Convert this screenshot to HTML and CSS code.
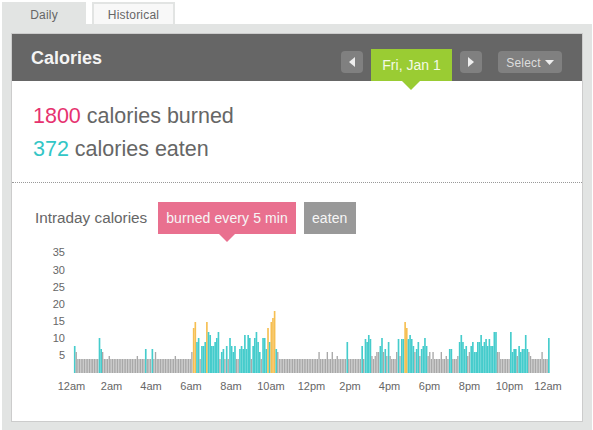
FILE: index.html
```html
<!DOCTYPE html>
<html>
<head>
  <title>Calories</title>
  <link rel="stylesheet" href="styles.css">
</head>
<body>
  <div class="tabs">
    <div class="tab active">Daily</div>
    <div class="tab">Historical</div>
  </div>
  <div class="frame">
    <div class="panel">
      <div class="header">
        <h1>Calories</h1>
        <div class="controls">
          <div class="btn arrow"><svg width="6" height="10" viewBox="0 0 6 10"><polygon points="6,0 6,10 0,5" fill="#eee"/></svg></div>
          <div class="date">Fri, Jan 1</div>
          <div class="btn arrow"><svg width="6" height="10" viewBox="0 0 6 10"><polygon points="0,0 0,10 6,5" fill="#eee"/></svg></div>
          <div class="btn select"><span class="select-text">Select</span> <svg width="9" height="5" viewBox="0 0 9 5"><polygon points="0,0 9,0 4.5,5" fill="#eee"/></svg></div>
        </div>
      </div>

      <div class="stats">
        <p><span class="burned">1800</span> calories burned</p>
        <p><span class="eaten">372</span> calories eaten</p>
      </div>

      <div class="intraday">
        <span class="intraday-label">Intraday calories</span>
        <div class="pill pink">burned every 5 min</div>
        <div class="pill grey">eaten</div>
      </div>

      <!-- viewBox is in page pixels so the bar data below reads straight off the chart -->
      <svg id="chart" class="chart" width="570" height="161" viewBox="12 243 570 161"></svg>
    </div>
  </div>

  <script>
  const chart = document.getElementById('chart');
  const NS = 'http://www.w3.org/2000/svg';

  // [x, height] in px, everything else is the flat 14px grey bar
  const grey = [[76.5,21],[103,21],[110,17],[136.7,17],[154.7,21],[174.7,17],[191,21],[217.7,17],[277.3,21],
    [318.7,21],[326.7,21],[331.7,21],[336.7,17],[371.7,17],[375,17],[376.7,21],[378.3,21],[382.7,21],[386,17],
    [389.3,17],[396,21],[399.3,17],[414.7,21],[419.7,17],[428,17],[429.7,21],[433,21],[441,21],[446,17],
    [457.7,17],[467.3,17],[469,21],[497.3,21],[499,21],[516.7,17],[528.3,21],[530,17],[541.7,21]];
  const cyan = [[75,27],[100,35],[101.7,24],[146,24],[152.7,24],[196,31],[198,35],[201,27],[202.7,27],[204.3,31],
    [207.7,41],[209.3,38],[211,27],[212.7,27],[214.3,31],[216,35],[219,41],[222.3,21],[224,24],[225.7,21],
    [227.3,27],[229,35],[230.7,27],[232.3,21],[234,27],[239,24],[240.7,27],[242.3,24],[244,38],[245.7,24],
    [247.3,38],[249,35],[252.3,27],[254,35],[255.7,41],[257.3,31],[259,21],[262.3,35],[264,35],[265.7,24],
    [269,31],[275.3,24],[346.7,31],[362.7,27],[364.7,34],[366.3,31],[368.3,38],[370,34],[380,27],[381.3,35],
    [384.3,24],[387.7,31],[398,34],[401.3,34],[402.7,34],[408,34],[409.7,38],[411.3,34],[413,27],[416.3,24],
    [418,31],[421.3,24],[423,27],[424.3,35],[426.3,27],[449,24],[450.7,24],[459,31],[460.7,38],[462.3,31],
    [464,24],[465.7,27],[470.7,27],[472.3,31],[474,21],[475.7,21],[477.3,31],[479,31],[480.7,38],[482.3,27],
    [484,31],[485.7,34],[487.3,27],[489,34],[490.7,27],[492.3,27],[494,41],[495.7,41],[510,41],[511.7,21],
    [513.3,24],[515,24],[518.3,27],[520,21],[521.7,24],[523.3,24],[525,38],[526.7,24],[548.3,35]];
  const orange = [[192.7,45],[194.5,51],[206,51],[267,45],[270.7,51],[272.3,55],[274,62],[404.7,51],[406.3,45]];

  const START = 74.5, STEP = 1.652, BASE = 373;
  const slots = new Array(288).fill(null).map(() => ({ h: 14, cls: 'bar-grey', w: 1.35 }));

  function mark(list, cls, w) {
    list.forEach(([x, h]) => {
      slots[Math.round((x - START) / STEP)] = { h, cls, w };
    });
  }
  mark(grey, 'bar-grey', 1.35);
  mark(cyan, 'bar-cyan', 1.65);
  mark(orange, 'bar-orange', 1.65);

  slots.forEach((s, i) => {
    const r = document.createElementNS(NS, 'rect');
    r.setAttribute('x', START + i * STEP - 0.6);
    r.setAttribute('y', BASE - s.h);
    r.setAttribute('width', s.w);
    r.setAttribute('height', s.h);
    r.setAttribute('class', s.cls);
    chart.appendChild(r);
  });

  function label(x, y, str, anchor) {
    const t = document.createElementNS(NS, 'text');
    t.setAttribute('x', x);
    t.setAttribute('y', y);
    t.setAttribute('text-anchor', anchor);
    t.setAttribute('class', 'axis');
    t.textContent = str;
    chart.appendChild(t);
  }

  [[5,359],[10,342],[15,325],[20,308],[25,291],[30,274],[35,256]].forEach(([v, y]) => label(65, y, v, 'end'));

  const hours = ['12am','2am','4am','6am','8am','10am','12pm','2pm','4pm','6pm','8pm','10pm','12am'];
  const hourX = [71.5,111.5,151,191,231,271,311.5,350,389.5,429.5,469.5,509.5,548];
  hours.forEach((h, i) => label(hourX[i], 390, h, 'middle'));
  </script>
</body>
</html>
```

FILE: styles.css
```css
body {
  margin: 0;
  padding: 2px 0 0 2px;
  height: 428px;
  overflow: hidden;
  background: #fff;
  font-family: "Liberation Sans", Arial, sans-serif;
  color: #666;
}

.tabs {
  display: flex;
  gap: 6px;
  height: 22px;
}
.tab {
  width: 79px;
  padding-top: 2px;
  border: 2px solid #e2e4e3;
  border-bottom: 0;
  background: #f8f8f8;
  font-size: 12px;
  letter-spacing: 0.2px;
  line-height: 18px;
  text-align: center;
  color: #666;
}
.tab.active {
  width: 80px;
  background: #e2e4e3;
}

.frame {
  width: 572px;
  height: 389px;
  padding: 9px 9px 8px;
  background: #e2e4e3;
}

.panel {
  height: 387px;
  border: 1px solid #ccc;
  background: #fff;
}

.header {
  display: flex;
  align-items: flex-end;
  justify-content: space-between;
  height: 47px;
  background: #666;
}
.header h1 {
  margin: 0 0 12px 19px;
  font-size: 18px;
  line-height: 22px;
  font-weight: bold;
  color: #f4f4f4;
}

.controls {
  display: flex;
  align-items: flex-end;
  padding-right: 20px;
}
.btn {
  display: flex;
  align-items: center;
  justify-content: center;
  height: 22px;
  margin-bottom: 8px;
  border-radius: 4px;
  background: #808080;
  font-size: 12px;
  color: #ddd;
}
.btn.arrow {
  width: 22px;
}
.btn.select {
  gap: 4px;
  width: 64px;
  margin-left: 16px;
}
.select-text {
  position: relative;
  top: 1px;
  letter-spacing: 0.2px;
}
.date {
  position: relative;
  width: 81px;
  margin: 0 8px;
  background: #9acc33;
  font-size: 14px;
  line-height: 33px;
  height: 32px;
  text-align: center;
  color: #f4f9e6;
}
.date::after {
  content: "";
  position: absolute;
  left: 31px;
  top: 32px;
  border: 9px solid transparent;
  border-top-color: #9acc33;
  border-bottom: 0;
}

.stats {
  padding: 19px 0 16px 21px;
  border-bottom: 1px dotted #999;
  font-size: 21.5px;
  line-height: 33px;
}
.stats p {
  margin: 0;
}
.burned {
  color: #e6326f;
}
.eaten {
  color: #33c6c6;
}

.intraday {
  display: flex;
  align-items: center;
  padding: 19px 0 0 23px;
}
.intraday-label {
  margin-right: 11px;
  font-size: 15.3px;
}
.pill {
  position: relative;
  height: 32px;
  margin-right: 8px;
  padding: 0 8px;
  font-size: 14px;
  letter-spacing: 0.1px;
  line-height: 32px;
  color: #f6f6f6;
}
.pill.pink {
  background: #e9708f;
}
.pill.pink::after {
  content: "";
  position: absolute;
  left: 61px;
  top: 32px;
  border: 8px solid transparent;
  border-top-color: #e9708f;
  border-bottom: 0;
}
.pill.grey {
  width: 36px;
  background: #999;
}

.chart {
  display: block;
  margin-top: 9px;
}
.axis {
  font-size: 11px;
  fill: #666;
}
.bar-grey {
  fill: #a8a8a8;
}
.bar-cyan {
  fill: #45cccc;
}
.bar-orange {
  fill: #f6bf52;
}
```
